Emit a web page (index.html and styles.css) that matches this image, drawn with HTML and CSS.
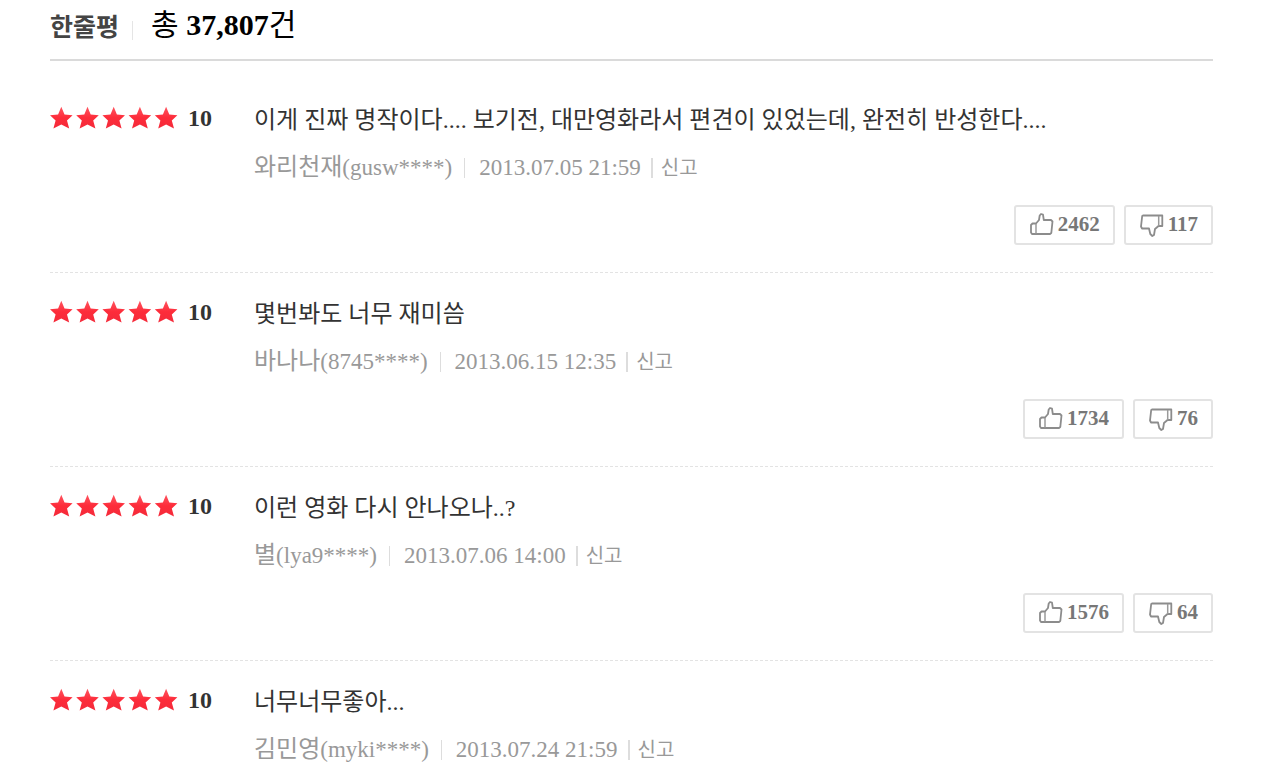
FILE: index.html
```
<!DOCTYPE html>
<html lang="ko">
<head>
    <meta charset="UTF-8">
    <meta name="viewport" content="width=device-width, initial-scale=1.0">
    <title>한줄평</title>
    <link rel="stylesheet" href="styles.css">
</head>
<body>
    <!-- shared icons -->
    <svg class="sprite" aria-hidden="true">
        <defs>
            <linearGradient id="starFill" x1="0" y1="0" x2="0" y2="1">
                <stop offset="0" stop-color="#ff5560"/>
                <stop offset="0.5" stop-color="#fd2c3a"/>
                <stop offset="1" stop-color="#f42a3a"/>
            </linearGradient>
        </defs>
        <symbol id="stars" viewBox="0 0 128 24">
            <g fill="url(#starFill)">
                <path id="star" d="M11.3 .8L14.5 8.6L22.6 9.2L17 14.6L19.2 22.6L11.3 18.6L3.4 22.6L5.6 14.6L0 9.2L8.1 8.6Z"/>
                <use href="#star" x="26.2"/>
                <use href="#star" x="52.4"/>
                <use href="#star" x="78.6"/>
                <use href="#star" x="104.8"/>
            </g>
        </symbol>
        <symbol id="thumb-up" viewBox="0 0 24 24">
            <path d="M1 12L2.5 10.5H6L9 7L9.7 2.5L11 1L13 1.7L13.8 7H21L22.5 8.5L21.3 20L20 21H2L1 19.5Z" fill="#fff" stroke="#8c8c8c" stroke-width="1.8" stroke-linejoin="round"/>
            <path d="M6 11V20.5" stroke="#9a9a9a" stroke-width="1.5"/>
        </symbol>
        <symbol id="thumb-down" viewBox="0 0 24 24">
            <path d="M3 2.5H22.3V13H18.5L15 16L14 22L12.3 23L10.3 21L9 15.5H2L1 13.5L2.2 3Z" fill="#fff" stroke="#8c8c8c" stroke-width="1.8" stroke-linejoin="round"/>
            <path d="M18.7 3V13" stroke="#9a9a9a" stroke-width="1.5"/>
        </symbol>
    </svg>

    <div class="reviews">
        <header class="reviews-header">
            <h1>한줄평</h1>
            <p class="total">총 <strong>37,807</strong>건</p>
        </header>

        <ul class="review-list">
            <li class="review">
                <div class="score">
                    <svg class="stars" aria-hidden="true"><use href="#stars"/></svg>
                    <strong>10</strong>
                </div>
                <div class="content">
                    <p class="text">이게 진짜 명작이다.... 보기전, 대만영화라서 편견이 있었는데, 완전히 반성한다....</p>
                    <div class="meta">
                        <a href="#" class="author"><span>와리천재</span>(gusw****)</a>
                        <span class="date">2013.07.05 21:59</span>
                        <a href="#" class="report">신고</a>
                    </div>
                </div>
                <div class="votes">
                    <button type="button" class="vote" aria-label="공감 2462"><svg class="thumb"><use href="#thumb-up"/></svg>2462</button>
                    <button type="button" class="vote" aria-label="비공감 117"><svg class="thumb"><use href="#thumb-down"/></svg>117</button>
                </div>
            </li>
            <li class="review">
                <div class="score">
                    <svg class="stars" aria-hidden="true"><use href="#stars"/></svg>
                    <strong>10</strong>
                </div>
                <div class="content">
                    <p class="text">몇번봐도 너무 재미씀</p>
                    <div class="meta">
                        <a href="#" class="author"><span>바나나</span>(8745****)</a>
                        <span class="date">2013.06.15 12:35</span>
                        <a href="#" class="report">신고</a>
                    </div>
                </div>
                <div class="votes">
                    <button type="button" class="vote" aria-label="공감 1734"><svg class="thumb"><use href="#thumb-up"/></svg>1734</button>
                    <button type="button" class="vote" aria-label="비공감 76"><svg class="thumb"><use href="#thumb-down"/></svg>76</button>
                </div>
            </li>
            <li class="review">
                <div class="score">
                    <svg class="stars" aria-hidden="true"><use href="#stars"/></svg>
                    <strong>10</strong>
                </div>
                <div class="content">
                    <p class="text">이런 영화 다시 안나오나..?</p>
                    <div class="meta">
                        <a href="#" class="author"><span>별</span>(lya9****)</a>
                        <span class="date">2013.07.06 14:00</span>
                        <a href="#" class="report">신고</a>
                    </div>
                </div>
                <div class="votes">
                    <button type="button" class="vote" aria-label="공감 1576"><svg class="thumb"><use href="#thumb-up"/></svg>1576</button>
                    <button type="button" class="vote" aria-label="비공감 64"><svg class="thumb"><use href="#thumb-down"/></svg>64</button>
                </div>
            </li>
            <li class="review">
                <div class="score">
                    <svg class="stars" aria-hidden="true"><use href="#stars"/></svg>
                    <strong>10</strong>
                </div>
                <div class="content">
                    <p class="text">너무너무좋아...</p>
                    <div class="meta">
                        <a href="#" class="author"><span>김민영</span>(myki****)</a>
                        <span class="date">2013.07.24 21:59</span>
                        <a href="#" class="report">신고</a>
                    </div>
                </div>
            </li>
        </ul>
    </div>
</body>
</html>
```
FILE: styles.css
```
* {
    box-sizing: border-box;
}
body {
    margin: 0;
    background: #fff;
    color: #333;
    font-family: "Liberation Serif", "Noto Sans CJK KR", serif;
}
h1, p, ul {
    margin: 0;
    padding: 0;
}
a {
    color: inherit;
    text-decoration: none;
}
.sprite {
    position: absolute;
    width: 0;
    height: 0;
}
.reviews {
    padding: 0 52px 0 50px;
}
.reviews-header {
    display: flex;
    align-items: center;
    height: 61px;
    padding-bottom: 10px;
    border-bottom: 2px solid #dadada;
}
.reviews-header h1 {
    color: #444;
    font-family: "Noto Sans CJK KR", sans-serif;
    font-size: 25px;
    line-height: 32px;
}
.total {
    display: flex;
    align-items: center;
    color: #000;
    font-size: 30px;
    line-height: 40px;
    white-space: pre;
}
.total::before {
    content: "";
    width: 1px;
    height: 19px;
    margin: 12px 18px 0 13px;
    background: #e5e5e5;
}
.review-list {
    padding-top: 18px;
    list-style: none;
}
.review {
    display: grid;
    grid-template-columns: 204px 1fr;
    align-content: start;
    padding: 22px 0 27px;
    border-bottom: 1px dashed #e3e3e3;
}
.review:last-child {
    padding-bottom: 0;
    border-bottom: 0;
}
.score {
    display: flex;
    align-items: center;
    height: 34px;
    gap: 10px;
    font-size: 24px;
}
.stars {
    width: 128px;
    height: 24px;
}
.text {
    padding-top: 1px;
    font-size: 24px;
    line-height: 36px;
}
.meta {
    display: flex;
    align-items: center;
    margin-top: 11px;
    color: #999;
    font-size: 23px;
    line-height: 36px;
}
.author span {
    font-size: 24px;
}
.date::before,
.report::before {
    content: "";
    display: inline-block;
    width: 1px;
    height: 20px;
    margin: 0 14px 0 12px;
    background: #ddd;
    vertical-align: -3px;
}
.report {
    font-size: 20px;
}
.report::before {
    width: 2px;
    margin: 0 8px 0 10px;
}
.votes {
    grid-column: 2;
    display: flex;
    justify-content: flex-end;
    gap: 9px;
    margin-top: 19px;
}
.vote {
    display: flex;
    align-items: center;
    gap: 4px;
    height: 40px;
    padding: 0 13px 1px 14px;
    border: 2px solid #e3e3e3;
    border-radius: 3px;
    background: #fff;
    color: #777;
    font-family: inherit;
    font-size: 21px;
    font-weight: bold;
    cursor: pointer;
}
.thumb {
    width: 24px;
    height: 24px;
}
```
